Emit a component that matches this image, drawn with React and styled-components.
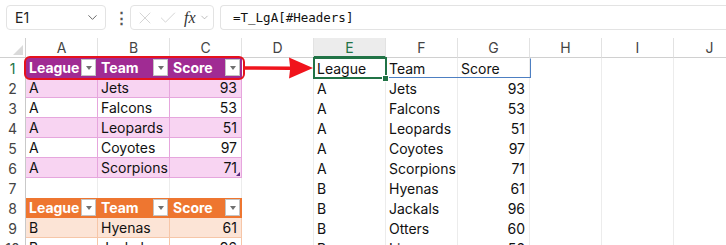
import styled, {createGlobalStyle, css} from "styled-components";
import {ChevronDown, X, Check} from "lucide-react";

const GlobalStyle = createGlobalStyle`
    body {
        margin: 0;
        background: #fff;
        font-family: Inter, "Open Sans", sans-serif;
        overflow: hidden;
    }
`;

const tones = {
    purpleHead: {bg: "#a02b93", line: "#a02b93", color: "#fff"},
    purpleBand: {bg: "#f8d4f2", line: "#e6a6dd", color: "#111"},
    purpleLight: {bg: "#fff", line: "#e6a6dd", color: "#111"},
    orangeHead: {bg: "#ee7630", line: "#ee7630", color: "#fff"},
    orangeBand: {bg: "#fce4d6", line: "#f6c6a8", color: "#111"},
    orangeLight: {bg: "#fff", line: "#f6c6a8", color: "#111"},
};

const Toolbar = styled.div`
    display: flex;
    align-items: center;
    gap: 8px;
    height: 25px;
    padding: 5px 0 8px 6px;
    color: #222;
`;

const Box = styled.div`
    display: flex;
    align-items: center;
    height: 25px;
    box-sizing: border-box;
    border: 1px solid #e3e3e3;
    border-radius: 4px;
    background: #fff;
`;

const NameBox = styled(Box)`
    width: 100px;
    padding: 0 5px 0 8px;
    justify-content: space-between;
    font-size: 14px;
`;

const Dots = styled.span`
    width: 4px;
    font-size: 15px;
    font-weight: 700;
    color: #555;
    text-align: center;
`;

const FxBox = styled(Box)`
    width: 84px;
    margin-left: 4px;
    padding: 0 3px 0 4px;
    gap: 3px;
    color: #cdcdcd;
`;

const Fx = styled.span`
    font-family: "Liberation Serif", serif;
    font-style: italic;
    font-size: 16px;
    color: #333;
    margin-left: 3px;
`;

const FormulaBox = styled(Box)`
    flex: 1;
    margin-left: -2px;
    padding-left: 12px;
    border-right: none;
    border-radius: 4px 0 0 4px;
    font-family: "DejaVu Sans Mono", monospace;
    font-size: 12.5px;
    color: #111;
`;

const Sheet = styled.div`
    position: relative;
    display: grid;
    grid-template-columns: 26px repeat(10, 72px);
    grid-template-rows: 20px;
    grid-auto-rows: 20px;
    font-size: 14px;
`;

const Corner = styled.div`
    position: relative;
    box-sizing: border-box;
    border-right: 1px solid #d0d0d0;
    border-bottom: 1px solid #d0d0d0;

    &::after {
        content: "";
        position: absolute;
        right: 2px;
        bottom: 2px;
        border-left: 10px solid transparent;
        border-bottom: 10px solid #dadada;
    }
`;

const ColHead = styled.div`
    box-sizing: border-box;
    display: flex;
    align-items: center;
    justify-content: center;
    color: #444;
    border-right: 1px solid #e2e2e2;
    border-bottom: 1px solid #d0d0d0;
    ${(p) =>
        p.$active &&
        css`
            background: #ececec;
            color: #217346;
            border-bottom: 2px solid #217346;
        `}
`;

const RowHead = styled.div`
    box-sizing: border-box;
    display: flex;
    align-items: center;
    justify-content: center;
    color: ${(p) => (p.$active ? "#217346" : "#444")};
    border-right: 1px solid #c9c9c9;
`;

const Cell = styled.div`
    position: relative;
    box-sizing: border-box;
    display: flex;
    align-items: center;
    justify-content: ${(p) => (p.$num ? "flex-end" : "space-between")};
    padding: 0 4px 0 3px;
    white-space: nowrap;
    border-right: 1px solid #ececec;
    color: #111;
    ${(p) =>
        p.$tone &&
        css`
            background: ${tones[p.$tone].bg};
            color: ${tones[p.$tone].color};
            border-right-color: ${tones[p.$tone].line};
            border-bottom: 1px solid ${tones[p.$tone].line};
        `}
    ${(p) =>
        p.$head &&
        css`
            font-weight: 700;
            padding-right: 1px;
        `}
    ${(p) =>
        p.$selected &&
        css`
            z-index: 2;
            outline: 2px solid #217346;
            outline-offset: -1px;

            &::after {
                content: "";
                position: absolute;
                right: -4px;
                bottom: -4px;
                width: 5px;
                height: 5px;
                background: #217346;
                border: 1px solid #fff;
            }
        `}
    ${(p) =>
        p.$corner &&
        css`
            &::after {
                content: "";
                position: absolute;
                right: 1px;
                bottom: 1px;
                border-left: 4px solid transparent;
                border-bottom: 4px solid #5a2a7a;
            }
        `}
`;

const FilterButton = styled.span`
    display: flex;
    align-items: center;
    justify-content: center;
    width: 13px;
    height: 15px;
    background: #fff;
    border: 1px solid #c4c4c4;

    &::before {
        content: "";
        border-left: 3.5px solid transparent;
        border-right: 3.5px solid transparent;
        border-top: 4px solid #707070;
    }
`;

const SpillOutline = styled.div`
    position: absolute;
    left: 314px;
    top: 20px;
    width: 217px;
    height: 20px;
    box-sizing: border-box;
    border: 1px solid #4d7fc2;
    border-top-color: transparent;
    pointer-events: none;
`;

const Callout = styled.div`
    position: absolute;
    left: 24px;
    top: 18px;
    width: 221px;
    height: 24px;
    box-sizing: border-box;
    border: 2px solid #e5121c;
    border-radius: 6px;
    z-index: 3;
`;

const ArrowSvg = styled.svg`
    position: absolute;
    left: 243px;
    top: 18px;
    z-index: 3;
`;

const columns = ["A", "B", "C", "D", "E", "F", "G", "H", "I", "J"];
const header = ["League", "Team", "Score"];

const leftRows = [
    {tone: "purple", kind: "head"},
    {tone: "purple", band: true, data: ["A", "Jets", 93]},
    {tone: "purple", data: ["A", "Falcons", 53]},
    {tone: "purple", band: true, data: ["A", "Leopards", 51]},
    {tone: "purple", data: ["A", "Coyotes", 97]},
    {tone: "purple", band: true, data: ["A", "Scorpions", 71], last: true},
    null,
    {tone: "orange", kind: "head"},
    {tone: "orange", band: true, data: ["B", "Hyenas", 61]},
    {tone: "orange", data: ["B", "Jackals", 96]},
];

const rightRows = [
    ["A", "Jets", 93],
    ["A", "Falcons", 53],
    ["A", "Leopards", 51],
    ["A", "Coyotes", 97],
    ["A", "Scorpions", 71],
    ["B", "Hyenas", 61],
    ["B", "Jackals", 96],
    ["B", "Otters", 60],
    ["B", "Lions", 56],
];

function LeftCells({row}) {
    if (!row) return [0, 1, 2].map((i) => <Cell key={i} />);
    if (row.kind === "head") {
        const tone = `${row.tone}Head`;
        return header.map((h) => (
            <Cell key={h} $tone={tone} $head>
                {h}
                <FilterButton />
            </Cell>
        ));
    }
    const tone = `${row.tone}${row.band ? "Band" : "Light"}`;
    return (
        <>
            <Cell $tone={tone}>{row.data[0]}</Cell>
            <Cell $tone={tone}>{row.data[1]}</Cell>
            <Cell $tone={tone} $num $corner={row.last}>
                {row.data[2]}
            </Cell>
        </>
    );
}

function RightCells({index}) {
    if (index === 0) {
        return (
            <>
                <Cell $selected>League</Cell>
                <Cell>Team</Cell>
                <Cell>Score</Cell>
            </>
        );
    }
    const [league, team, score] = rightRows[index - 1];
    return (
        <>
            <Cell>{league}</Cell>
            <Cell>{team}</Cell>
            <Cell $num>{score}</Cell>
        </>
    );
}

function Row({index, row}) {
    return (
        <>
            <RowHead $active={index === 0}>{index + 1}</RowHead>
            <LeftCells row={row} />
            <Cell />
            <RightCells index={index} />
            <Cell />
            <Cell />
            <Cell />
        </>
    );
}

export default function App() {
    return (
        <>
            <GlobalStyle />
            <Toolbar>
                <NameBox>
                    E1
                    <ChevronDown size={15} strokeWidth={1.4} color="#555" />
                </NameBox>
                <Dots>⋮</Dots>
                <FxBox>
                    <X size={20} strokeWidth={1} />
                    <Check size={20} strokeWidth={1} />
                    <Fx>fx</Fx>
                    <ChevronDown size={11} strokeWidth={1.4} color="#999" />
                </FxBox>
                <FormulaBox>=T_LgA[#Headers]</FormulaBox>
            </Toolbar>

            <Sheet>
                <Corner />
                {columns.map((c) => (
                    <ColHead key={c} $active={c === "E"}>
                        {c}
                    </ColHead>
                ))}

                {leftRows.map((row, i) => (
                    <Row key={i} index={i} row={row} />
                ))}

                <SpillOutline />
                <Callout />
                <ArrowSvg width="72" height="24" viewBox="0 0 72 24">
                    <path
                        d="M0 10.2 L47 10.6 L46 1.5 L70 12 L46 22.5 L47 14 L0 13.8 Z"
                        fill="#f0141c"
                    />
                </ArrowSvg>
            </Sheet>
        </>
    );
}
